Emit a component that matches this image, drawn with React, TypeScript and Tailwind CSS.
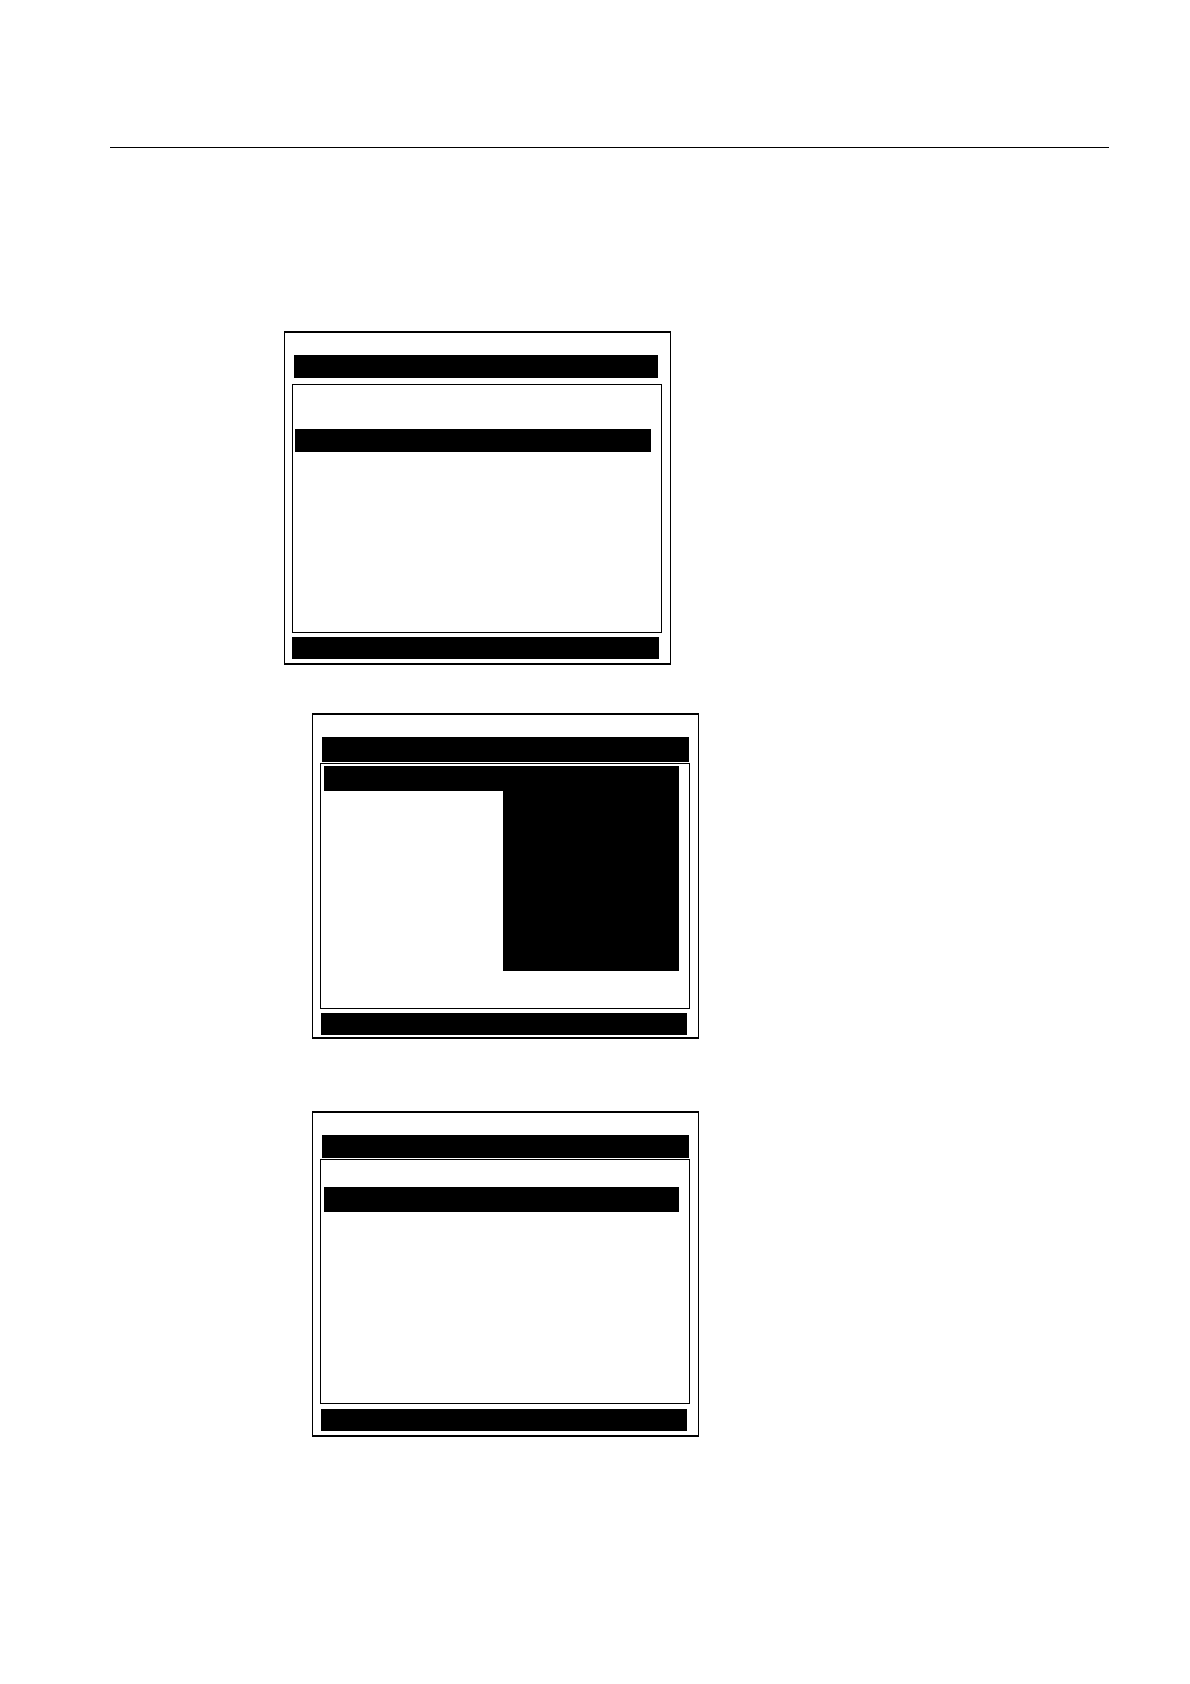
import type { ReactNode } from "react";

type ScreenProps = {
  label: string;
  className: string;
  titleClass: string;
  bodyClass: string;
  footerClass: string;
  children: ReactNode;
};

function Screen({ label, className, titleClass, bodyClass, footerClass, children }: ScreenProps) {
  return (
    <section
      aria-label={label}
      className={`flex w-full max-w-[387px] flex-col border-x border-y-2 border-black pt-[22px] ${className}`}
    >
      <header className={`bg-black ${titleClass}`} />
      <div className={`ml-[7px] mr-2 border border-black ${bodyClass}`}>{children}</div>
      <footer className={`h-[22px] bg-black ${footerClass}`} />
    </section>
  );
}

export default function App() {
  return (
    <main className="min-h-screen bg-white pb-16 pl-[110px] pr-[81px] pt-[147px]">
      <hr className="border-t border-black" />
      <div className="flex flex-col items-start pt-[183px]">
        <Screen
          label="List screen"
          className="ml-[174px] pb-1"
          titleClass="ml-[9px] mr-3 h-[23px]"
          bodyClass="mt-[6px] min-h-[249px] pt-11"
          footerClass="ml-[7px] mr-[11px] mt-1"
        >
          <div className="ml-[2px] mr-[10px] h-[23px] bg-black" />
        </Screen>

        <Screen
          label="Menu screen"
          className="ml-[202px] mt-12 pb-[2px]"
          titleClass="ml-[9px] mr-[9px] h-[25px]"
          bodyClass="mt-px min-h-[246px] pt-[2px]"
          footerClass="ml-2 mr-[11px] mt-1"
        >
          <div className="ml-[3px] mr-[10px] flex flex-col items-end">
            <div className="h-[25px] w-full bg-black" />
            <div className="h-[180px] w-[176px] bg-black" />
          </div>
        </Screen>

        <Screen
          label="Selection screen"
          className="ml-[202px] mt-[72px] pb-1"
          titleClass="ml-[9px] mr-[9px] h-[23px]"
          bodyClass="mt-px min-h-[245px] pt-[27px]"
          footerClass="ml-2 mr-[11px] mt-[5px]"
        >
          <div className="ml-[3px] mr-[10px] h-[25px] bg-black" />
        </Screen>
      </div>
    </main>
  );
}
